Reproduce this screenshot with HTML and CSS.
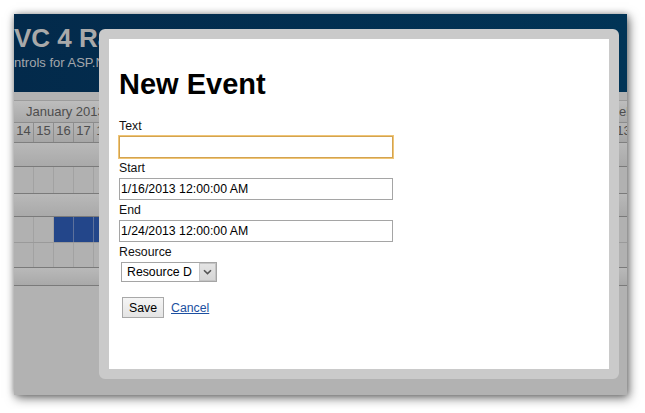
FILE: index.html
```html
<!DOCTYPE html>
<html lang="en">
<head>
  <meta charset="UTF-8" />
  <title>New Event</title>
  <link rel="stylesheet" href="styles.css">
</head>
<body>
  <div class="window">
    <!-- page header (scrolled to the right) -->
    <div class="header">
      <div class="title">VC 4 Razor</div>
      <div class="subtitle">ntrols for ASP.NET MVC</div>
    </div>

    <!-- scheduler, dimmed behind the dialog -->
    <div class="scheduler">
      <div class="months">
        <div class="month jan">January 2013</div>
        <div class="month">February 2013</div>
      </div>
      <div class="days">
        <span>14</span><span>15</span><span>16</span><span>17</span><span>18</span><span>19</span>
        <span>20</span><span>21</span><span>22</span><span>23</span><span>24</span><span>25</span>
        <span>26</span><span>27</span><span>28</span><span>29</span><span>30</span><span>31</span>
        <span>1</span><span>2</span><span>3</span><span>4</span><span>5</span><span>6</span>
        <span>7</span><span>8</span><span>9</span><span>10</span><span>11</span><span>12</span>
        <span>13</span>
      </div>
      <div class="group g1"></div>
      <div class="cells c1"></div>
      <div class="group g2"></div>
      <div class="cells c2">
        <div class="selection" style="width: 180px;"></div>
      </div>
      <div class="cells c3"></div>
      <div class="group g3"></div>
    </div>

    <!-- modal dialog -->
    <div class="modal">
      <div class="modal-body">
        <h1>New Event</h1>

        <label for="text">Text</label>
        <input id="text" class="field focused" type="text" value="">

        <label for="start">Start</label>
        <input id="start" class="field" type="text" value="1/16/2013 12:00:00 AM">

        <label for="end">End</label>
        <input id="end" class="field" type="text" value="1/24/2013 12:00:00 AM">

        <label for="resource">Resource</label>
        <span class="select">
          <select id="resource">
            <option>Resource D</option>
          </select>
          <span class="select-arrow">
            <svg width="9" height="6" viewBox="0 0 9 6"><path d="M1 1.2 L4.5 4.6 L8 1.2" fill="none" stroke="#555" stroke-width="1.6"/></svg>
          </span>
        </span>

        <div class="actions">
          <button class="btn" type="button">Save</button>
          <a href="#" class="cancel">Cancel</a>
        </div>
      </div>
    </div>
  </div>
</body>
</html>
```

FILE: styles.css
```css
/* ================================
   General
   ================================ */
* {
  margin: 0;
  padding: 0;
  box-sizing: border-box;
}
body {
  font-family: "Liberation Sans", Arial, sans-serif;
  background-color: #fff;
}

.window {
  position: relative;
  width: 613px;
  height: 381px;
  margin: 14px;
  overflow: hidden;
  background-color: #b2b2b2;
  box-shadow: 2px 3px 10px rgba(0, 0, 0, 0.55), 0 0 6px rgba(0, 0, 0, 0.25);
}

/* Header */
.header {
  height: 78px;
  padding-top: 9px;
  background: linear-gradient(to right, #032a4b, #013456);
  white-space: nowrap;
}
.title {
  font-size: 26px;
  font-weight: bold;
  line-height: 30px;
  color: #a9a9a9;
}
.subtitle {
  margin-top: 2px;
  font-size: 13px;
  line-height: 16px;
  color: #a3a7ab;
}

/* ================================
   Scheduler
   ================================ */
.scheduler {
  margin-top: 8px;
  border-top: 1px solid #9c9c9c;
  color: #4d4d4d;
  font-size: 13px;
}
.months {
  display: flex;
  height: 22px;
  line-height: 21px;
  border-bottom: 1px solid #8c8c8c;
  background: linear-gradient(#bdbdbd, #a9a9a9);
  white-space: nowrap;
}
.month {
  padding-left: 2px;
}
.month.jan {
  flex-shrink: 0;
  width: 595px;
  padding-left: 12px;
  border-right: 1px solid #8c8c8c;
}
.days {
  display: flex;
  height: 20px;
  line-height: 16px;
  border-bottom: 1px solid #7f7f7f;
  background: linear-gradient(#b6b6b6, #a6a6a6);
}
.days span {
  flex-shrink: 0;
  width: 20px;
  text-align: center;
  border-right: 1px solid #8e8e8e;
}

.group {
  background: linear-gradient(#b9b9b9, #a9a9a9);
  border-bottom: 1px solid #7a7a7a;
}
.cells + .group {
  border-top: 1px solid #7a7a7a;
}
.cells {
  background: repeating-linear-gradient(to right, #b1b1b1 0 19px, #a2a2a2 19px 20px);
}
.cells + .cells {
  border-top: 1px solid #9a9a9a;
}
.g1 { height: 24px; }
.c1 { height: 26px; }
.g2 { height: 24px; }
.c2 { height: 25px; }
.c3 { height: 25px; }
.g3 { height: 19px; }

.selection {
  height: 100%;
  margin-left: 40px;
  background: repeating-linear-gradient(to right, #23468a 0 19px, #5d719b 19px 20px);
}

/* ================================
   Modal dialog
   ================================ */
.modal {
  position: absolute;
  top: 15px;
  left: 85px;
  width: 520px;
  height: 350px;
  border: 10px solid #cacaca;
  border-radius: 6px;
  background-color: #fff;
}
.modal-body {
  padding: 10px;
  font-size: 12.3px;
  color: #111;
}
.modal-body h1 {
  margin: 18px 0 15px;
  font-size: 29px;
  line-height: 34px;
  color: #000;
}
.modal-body label {
  display: block;
  line-height: 20px;
}
.field {
  display: block;
  width: 274px;
  height: 22px;
  padding: 0 1px;
  border: 1px solid #a5a5a5;
  font-family: inherit;
  font-size: 12.3px;
  color: #000;
  outline: none;
}
.field.focused {
  border-color: #d3a350;
  box-shadow: 0 0 0 1px #f0c576;
}

.select {
  display: inline-flex;
  width: 96px;
  height: 20px;
  margin-left: 2px;
  border: 1px solid #a5a5a5;
  vertical-align: top;
}
.select select {
  appearance: none;
  -webkit-appearance: none;
  width: 77px;
  height: 18px;
  padding-left: 5px;
  border: none;
  outline: none;
  background: #fff;
  font-family: inherit;
  font-size: 12.3px;
  color: #000;
}
.select-arrow {
  display: flex;
  align-items: center;
  justify-content: center;
  width: 17px;
  border: 1px solid #c4c4c4;
  background: linear-gradient(#e4e4e4, #d6d6d6);
}

.actions {
  display: flex;
  align-items: center;
  gap: 7px;
  margin-top: 15px;
  padding-left: 3px;
}
.btn {
  width: 42px;
  height: 21px;
  border: 1px solid #a8a8a8;
  background: linear-gradient(#f5f5f5, #e4e4e4);
  font-family: inherit;
  font-size: 12.3px;
  color: #000;
}
.cancel {
  color: #1c4fa0;
  text-decoration: underline;
}
```
